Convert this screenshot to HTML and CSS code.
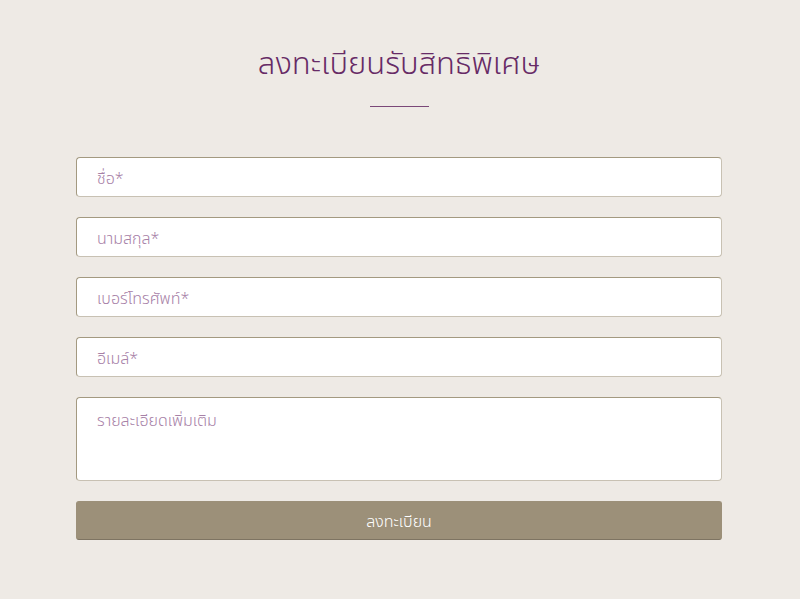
FILE: index.html
```html
<!DOCTYPE html>
<html>
<head lang="th">
    <meta charset="UTF-8">
    <title>ลงทะเบียนรับสิทธิพิเศษ</title>
    <link rel="stylesheet" href="styles.css">
</head>
<body>
<div class="register">
    <h1 class="title">ลงทะเบียนรับสิทธิพิเศษ</h1>
    <div class="line"></div>

    <form class="form">
        <input class="field" type="text" placeholder="ชื่อ*">
        <input class="field" type="text" placeholder="นามสกุล*">
        <input class="field" type="text" placeholder="เบอร์โทรศัพท์*">
        <input class="field" type="text" placeholder="อีเมล์*">
        <textarea class="field area" placeholder="รายละเอียดเพิ่มเติม"></textarea>
        <button class="btn" type="button">ลงทะเบียน</button>
    </form>
</div>
</body>
</html>
```

FILE: styles.css
```css
* {
    padding: 0;
    margin: 0;
    box-sizing: border-box;
}

body {
    background-color: #eeeae5;
    font-family: "Noto Sans Thai", "Noto Sans", "DejaVu Sans", sans-serif;
}

.register {
    width: 646px;
    margin-left: 76px;
    padding-top: 42px;
    display: flex;
    flex-direction: column;
    align-items: center;
}

.title {
    font-size: 31px;
    font-weight: 300;
    color: #672b66;
    line-height: 46px;
}

.line {
    width: 59px;
    height: 1px;
    background-color: #7a4878;
    margin-top: 18px;
}

.form {
    width: 100%;
    margin-top: 50px;
    display: flex;
    flex-direction: column;
    gap: 20px;
}

.field {
    display: block;
    width: 100%;
    height: 40px;
    padding: 4px 20px 0;
    background-color: #fff;
    border: 1px solid;
    border-color: #a39980 #c8c1b3 #c8c1b3 #a39980;
    border-radius: 4px;
    font-family: inherit;
    font-size: 16px;
    font-weight: 300;
    color: #5a4a5a;
    outline: none;
}

.field::placeholder {
    color: #a781a7;
}

.area {
    height: 84px;
    padding-top: 11px;
    resize: none;
}

.btn {
    height: 39px;
    padding-top: 3px;
    background-color: #9c9079;
    border: 1px solid #9c9079;
    border-bottom-color: #7e7462;
    border-radius: 3px;
    color: #fff;
    font-family: inherit;
    font-size: 16px;
    font-weight: 300;
    cursor: pointer;
}
```
